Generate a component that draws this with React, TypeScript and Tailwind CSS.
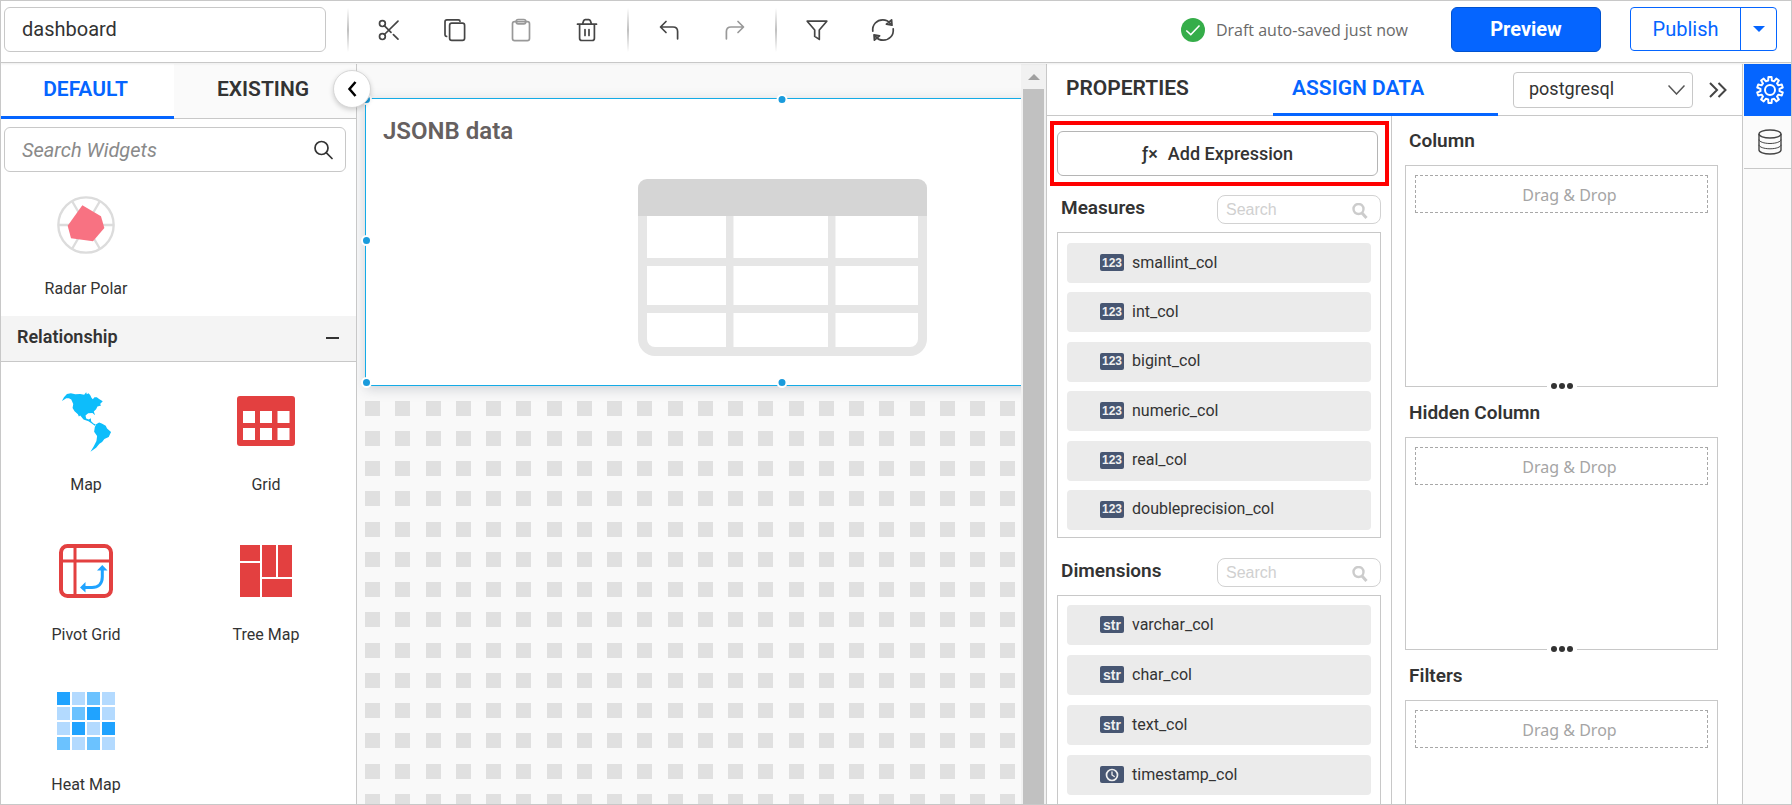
import React from "react";

type IconProps = { children: React.ReactNode; className?: string; box?: string };

function Stroke({ children, className = "size-6", box = "0 0 24 24" }: IconProps) {
  return (
    <svg
      viewBox={box}
      className={className}
      fill="none"
      stroke="currentColor"
      strokeWidth="1.7"
      strokeLinecap="round"
      strokeLinejoin="round"
      aria-hidden="true"
    >
      {children}
    </svg>
  );
}

function ToolButton({ label, muted, children }: { label: string; muted?: boolean; children: React.ReactNode }) {
  return (
    <button
      type="button"
      aria-label={label}
      disabled={muted}
      className={`flex h-[46px] w-[66px] items-center justify-center ${muted ? "text-[#999999]" : "text-[#454545]"}`}
    >
      <Stroke>{children}</Stroke>
    </button>
  );
}

function Divider() {
  return (
    <div className="flex w-4 justify-center">
      <div className="h-11 w-0.5 bg-linear-to-b from-white via-[#c0c0c0] to-white" />
    </div>
  );
}

function Toolbar() {
  return (
    <header className="z-20 flex h-[62px] shrink-0 items-start border-b border-[#c8c8c8] bg-white pt-1.5 shadow-[0_1px_2px_rgba(0,0,0,0.08)]">
      <input
        aria-label="Dashboard name"
        defaultValue="dashboard"
        className="mr-3.5 ml-[3px] h-[45px] w-[322px] shrink-0 rounded-md border border-[#c8c8c8] pr-4 pb-px pl-[17px] text-xl text-[#333333] outline-none"
      />
      <div className="flex items-center">
        <Divider />
        <ToolButton label="Cut">
          <circle cx="5.4" cy="5.6" r="2.9" />
          <circle cx="5.4" cy="18.6" r="2.9" />
          <path d="M7.3 7.7 14 14.3M16.4 16.6 21 21.2M21 3.2 7.4 16.5" />
        </ToolButton>
        <ToolButton label="Copy">
          <rect x="6.6" y="5.2" width="15" height="17.2" rx="2.2" />
          <path d="M3.6 18.4c-1 0-1.6-.8-1.6-1.8V3.8C2 2.6 2.7 1.9 3.9 1.9H15.4c1 0 1.6.5 1.6 1.3" />
        </ToolButton>
        <ToolButton label="Paste" muted>
          <rect x="3.5" y="3.6" width="17" height="19" rx="2.2" />
          <rect x="7.2" y="1.5" width="9.6" height="4.3" rx="2" />
        </ToolButton>
        <ToolButton label="Delete">
          <path d="M2.5 6.2H21.5M4.6 6.2V20.2c0 1.5.8 2.3 2.2 2.3H17.2c1.4 0 2.2-.8 2.2-2.3V6.2M7.5 6 8.7 2.6C9 1.9 9.5 1.6 10.2 1.6H13.8c.7 0 1.2.3 1.5 1L16.5 6M10 11.5V17.5M14 11.5V17.5" />
        </ToolButton>
        <Divider />
        <ToolButton label="Undo">
          <path d="M9 3.5 3.5 9 9 14.5M3.8 9H16c3 0 4.6 1.6 4.6 4.6V20.8" />
        </ToolButton>
        <ToolButton label="Redo" muted>
          <path d="M15 3.5 20.5 9 15 14.5M20.2 9H8c-3 0-4.6 1.6-4.6 4.6V20.8" />
        </ToolButton>
        <Divider />
        <ToolButton label="Filter">
          <path d="M2.2 3.2H21.8L14.3 12V21.4L9.7 18.4V12Z" />
        </ToolButton>
        <ToolButton label="Refresh">
          <path d="M1.8 13.2C1 6.5 6 1.8 11.8 1.8c3.1 0 5.6 1.2 7.6 3.6M20.6 1.8 21 7.2 15.4 6.2ZM22.2 10.8C23 17.5 18 22.2 12.2 22.2c-3.1 0-5.6-1.2-7.6-3.6M3.4 22.2 3 16.8 8.6 17.8Z" />
        </ToolButton>
      </div>
      <div className="ml-auto flex items-start pr-3.5">
        <div className="mr-[43px] flex h-[45px] items-center gap-[11px]">
          <svg viewBox="0 0 24 24" className="size-6" aria-hidden="true">
            <circle cx="12" cy="12" r="12" fill="#35ad49" />
            <path d="M5.3 12.5 9.8 16.6 18.5 7.6" fill="none" stroke="#fff" strokeWidth="1.5" />
          </svg>
          <span className="font-['Open_Sans',sans-serif] text-base whitespace-nowrap text-[#696969]">
            Draft auto-saved just now
          </span>
        </div>
        <button type="button" className="mr-[29px] h-[45px] w-[150px] rounded-md border border-[#0052cf] bg-[#0565ff] pb-0.5 text-xl font-bold text-white">
          Preview
        </button>
        <div className="flex h-11 w-[147px] rounded-[4px] border border-[#0565ff] text-[#0565ff]">
          <button type="button" className="flex-1 text-xl">
            Publish
          </button>
          <button type="button" aria-label="More publish options" className="flex w-9 items-center justify-center border-l border-[#0565ff]">
            <svg viewBox="0 0 12 6" className="h-1.5 w-3" fill="currentColor" aria-hidden="true">
              <path d="M0 0H12L6 6Z" />
            </svg>
          </button>
        </div>
      </div>
    </header>
  );
}

function RadarIcon() {
  return (
    <svg viewBox="0 0 174 174" className="size-[58px]" aria-hidden="true">
      <g fill="none" stroke="#dcdcdc" strokeWidth="7">
        <circle cx="87" cy="87" r="83" />
        <path d="M3 87H171M45 15 129 159M129 15 45 159" />
      </g>
      <path d="M76 28 132 61 142 96 108 136 42 127 32 89Z" fill="#f87282" />
    </svg>
  );
}

function MapIcon() {
  return (
    <svg viewBox="183 633 152 184" className="h-[61px] w-[51px]" fill="#0dbdfb" aria-hidden="true">
      <path d="M185 663 191 652 200 642 212 640 225 643 240 642 252 644 258 637 260 643 265 640 270 645 274 653 278 658 283 652 290 652 297 657 308 664 300 672 303 677 292 680 288 688 281 695 285 706 277 699 264 700 256 707 258 716 266 719 272 715 273 724 280 731 287 734 284 738 275 731 265 724 250 719 240 707 236 710 233 703 223 694 217 684 219 672 213 659 206 655 198 655Z" />
      <path d="M288 733 297 728 305 731 317 738 321 746 333 757 326 772 313 778 306 787 298 792 288 804 271 816 281 800 289 784 291 769 282 756 284 742Z" />
    </svg>
  );
}

function GridIcon() {
  return (
    <svg viewBox="0 0 58 50" className="h-[50px] w-[58px]" aria-hidden="true">
      <rect width="58" height="50" rx="3" fill="#e34040" />
      <path fill="#fff" d="M6 15h12v12H6zM23 15h12v12H23zM40.5 15h12v12h-12zM6 32h12v12H6zM23 32h12v12H23zM40.5 32h12v12h-12z" />
    </svg>
  );
}

function PivotIcon() {
  return (
    <svg viewBox="0 0 54 54" className="size-[54px]" aria-hidden="true">
      <g fill="none" stroke="#e34040">
        <rect x="2" y="2" width="50" height="50" rx="6.5" strokeWidth="4" />
        <path d="M16 2V52M2 17H52" strokeWidth="3" />
      </g>
      <path d="M43.3 26V33C43.3 40 39 43.5 33 43.5H26" fill="none" stroke="#20a3ff" strokeWidth="3" />
      <path d="M38 26.5 43.3 21 48.5 26.5ZM26.5 38 21 43.5 26.5 48.5Z" fill="#20a3ff" />
    </svg>
  );
}

function TreeIcon() {
  return (
    <svg viewBox="0 0 52 52" className="size-[52px]" fill="#e34040" aria-hidden="true">
      <path d="M0 0H20V16H0zM0 18H20V52H0zM22 0H36V32H22zM38 0H52V32H38zM22 34H52V52H22z" />
    </svg>
  );
}

const heat = [
  ["#20a3ff", "#b3daff", "#6bc2ff", "#b3daff"],
  ["#b3daff", "#6bc2ff", "#20a3ff", "#b3daff"],
  ["#b3daff", "#20a3ff", "#b3daff", "#20a3ff"],
  ["#6bc2ff", "#b3daff", "#6bc2ff", "#b3daff"],
];

function HeatIcon() {
  return (
    <svg viewBox="0 0 58 58" className="size-[58px]" aria-hidden="true">
      {heat.map((row, y) =>
        row.map((fill, x) => <rect key={`${x}-${y}`} x={x * 15} y={y * 15} width="13" height="13" fill={fill} />),
      )}
    </svg>
  );
}

function Widget({ label, children }: { label: string; children: React.ReactNode }) {
  return (
    <button type="button" className="flex h-[150px] w-full shrink-0 flex-col items-center text-[#333333]">
      <span className="flex h-[88px] items-end justify-center">
        <span className="flex h-16 items-center">{children}</span>
      </span>
      <span className="mt-5 text-base">{label}</span>
    </button>
  );
}

function Sidebar() {
  return (
    <aside className="relative z-10 w-[356px] shrink-0 border-r border-[#c8c8c8] bg-white">
      <div className="flex h-[55px] text-[21px] font-semibold">
        <button type="button" className="w-[173px] border-b-3 border-[#0565ff] pr-1 text-[#0565ff]">
          DEFAULT
        </button>
        <button type="button" className="flex-1 border-b border-[#c8c8c8] bg-[#fafafa] pr-1 pb-0.5 text-[#333333]">
          EXISTING
        </button>
      </div>
      <button
        type="button"
        aria-label="Collapse widget panel"
        className="absolute top-1.5 -right-[15px] flex size-[38px] items-center justify-center rounded-full border border-[#d8d8d8] bg-white text-black shadow-[0_2px_5px_rgba(0,0,0,0.18)]"
      >
        <svg viewBox="0 0 10 16" className="h-4 w-2.5" fill="none" stroke="currentColor" strokeWidth="2.5" aria-hidden="true">
          <path d="M8.5 1 2.5 8 8.5 15" />
        </svg>
      </button>
      <div className="mt-2 mr-2.5 ml-[3px] flex h-[45px] items-center rounded-md border border-[#c8c8c8] pr-3 pl-[17px]">
        <input
          aria-label="Search Widgets"
          placeholder="Search Widgets"
          className="min-w-0 flex-1 text-xl text-[#333333] italic outline-none placeholder:text-[#8a8a8a]"
        />
        <Stroke className="size-5 text-[#333333]" box="0 0 20 20">
          <circle cx="8.5" cy="8" r="6.5" />
          <path d="M13.2 12.7 19 18.5" />
        </Stroke>
      </div>
      <div className="-mt-[3px] h-[147px] w-[170px] overflow-hidden">
        <Widget label="Radar Polar">
          <RadarIcon />
        </Widget>
      </div>
      <button
        type="button"
        className="flex h-[46px] w-full items-center justify-between border-b border-[#c8c8c8] bg-[#f4f4f4] pr-[17px] pb-1 pl-4 text-lg font-semibold text-[#333333]"
      >
        Relationship
        <span className="mt-0.5 h-0.5 w-[13px] bg-[#333333]" />
      </button>
      <div className="grid grid-cols-[170px_190px] pt-[3px]">
        <Widget label="Map">
          <MapIcon />
        </Widget>
        <Widget label="Grid">
          <GridIcon />
        </Widget>
        <Widget label="Pivot Grid">
          <PivotIcon />
        </Widget>
        <Widget label="Tree Map">
          <TreeIcon />
        </Widget>
        <Widget label="Heat Map">
          <HeatIcon />
        </Widget>
      </div>
    </aside>
  );
}

const DOT_PITCH = 30.25;
const dotPath = Array.from({ length: 30 }, (_, r) =>
  Array.from({ length: 60 }, (_, c) => `M${Math.round(c * DOT_PITCH)} ${Math.floor(r * DOT_PITCH)}h15v15h-15z`).join(""),
).join("");

function Handle({ className }: { className: string }) {
  return <span className={`absolute size-[11px] rounded-full border-2 border-white bg-[#1a9bdc] ${className}`} />;
}

function Canvas() {
  return (
    <main className="flex min-w-0 flex-1 bg-[#f9f9f9]">
      <div className="flex min-w-0 flex-1 flex-col overflow-hidden pt-[34px] pl-2">
        <section className="relative h-72 w-[834px] shrink-0 border border-[#14abe6] bg-white pt-4 pl-[17px] shadow-[0_3px_12px_rgba(60,70,90,0.22)]">
          <h2 className="text-2xl font-semibold text-[#666060]">JSONB data</h2>
          <svg viewBox="0 0 289 177" className="mt-8 ml-[255px] h-[177px] w-[289px]" aria-hidden="true">
            <rect width="289" height="177" rx="17" fill="#e6e6e6" />
            <path d="M0 37V9A9 9 0 0 1 9 0H280A9 9 0 0 1 289 9V37Z" fill="#d5d5d5" />
            <path
              fill="#fff"
              d="M9 37H88V79H9zM95.5 37H190V79H95.5zM197.5 37H280V79H197.5zM9 87H88V126H9zM95.5 87H190V126H95.5zM197.5 87H280V126H197.5zM9 134H88V168H17a8 8 0 0 1-8-8zM95.5 134H190V168H95.5zM197.5 134H280V160a8 8 0 0 1-8 8H197.5z"
            />
          </svg>
          <Handle className="-top-[5px] -left-[5px]" />
          <Handle className="-top-[5px] left-1/2 -translate-x-1/2" />
          <Handle className="top-[136px] -left-[5px]" />
          <Handle className="-bottom-[3px] -left-[5px]" />
          <Handle className="-bottom-[3px] left-1/2 -translate-x-1/2" />
        </section>
        <svg className="mt-[15px] min-h-0 w-full flex-1" shapeRendering="crispEdges" aria-hidden="true">
          <path d={dotPath} fill="#e0e0e0" />
        </svg>
      </div>
      <div className="flex w-[25px] shrink-0 flex-col items-center bg-[#f1f1f1]">
        <svg viewBox="0 0 12 6" className="mt-2.5 mb-[9px] h-1.5 w-3 shrink-0" fill="#a0a0a0" aria-hidden="true">
          <path d="M6 0 12 6H0Z" />
        </svg>
        <div className="w-[21px] flex-1 bg-[#c1c1c1]" />
      </div>
    </main>
  );
}

function TypeBadge({ kind }: { kind: string }) {
  return (
    <span className="flex h-[17px] w-6 items-center justify-center rounded-xs bg-[#475672] font-['Liberation_Sans',sans-serif] text-xs font-bold text-[#f0f0f0]">
      {kind === "time" ? (
        <Stroke className="size-3.5" box="0 0 14 14">
          <circle cx="7" cy="7" r="5.5" />
          <path d="M7 4V7L9.3 8.5" strokeWidth="1.3" />
        </Stroke>
      ) : (
        <span className={kind === "str" ? "text-sm leading-4" : ""}>{kind}</span>
      )}
    </span>
  );
}

function Field({ kind, name }: { kind: string; name: string }) {
  return (
    <li className="flex h-10 shrink-0 items-center gap-2 rounded-[4px] bg-[#ebebeb] pb-px pl-[33px] text-base text-[#333333]">
      <TypeBadge kind={kind} />
      {name}
    </li>
  );
}

function FieldHeader({ title }: { title: string }) {
  return (
    <div className="flex items-start justify-between pl-1">
      <h3 className="pt-px text-[19px] leading-6 font-semibold text-[#333333]">{title}</h3>
      <div className="flex h-[29px] w-[164px] items-center rounded-lg border border-[#d2d2d2] pr-3 pl-2">
        <input
          aria-label={`Search ${title}`}
          placeholder="Search"
          className="min-w-0 flex-1 font-['Liberation_Sans',sans-serif] text-base outline-none placeholder:text-[#d0d0d0]"
        />
        <svg viewBox="0 0 16 16" className="mt-0.5 size-4" fill="none" stroke="#cccccc" aria-hidden="true">
          <circle cx="6.5" cy="6" r="5" strokeWidth="2.4" />
          <path d="M10 10 14.5 15" strokeWidth="3" />
        </svg>
      </div>
    </div>
  );
}

const measures = ["smallint_col", "int_col", "bigint_col", "numeric_col", "real_col", "doubleprecision_col"];
const dimensions = [
  ["str", "varchar_col"],
  ["str", "char_col"],
  ["str", "text_col"],
  ["time", "timestamp_col"],
];

function Fields() {
  return (
    <div className="flex w-[345px] shrink-0 flex-col border-r border-[#c8c8c8]">
      <div className="mt-[5px] ml-[3px] h-[65px] w-[339px] shrink-0 border-4 border-[#ff0000] px-[3px] pt-1.5">
        <button type="button" className="flex h-[45px] w-[321px] items-center justify-center gap-2.5 rounded-md border border-[#b5b5b5] text-lg font-medium text-[#333333]">
          <span>ƒ×</span>
          <span>Add Expression</span>
        </button>
      </div>
      <div className="flex min-h-0 flex-1 flex-col px-2.5">
        <div className="mt-[9px]">
          <FieldHeader title="Measures" />
        </div>
        <ul className="mt-2 flex h-[306px] shrink-0 flex-col justify-between border border-[#c8c8c8] px-[9px] pt-2.5 pb-[7px]">
          {measures.map((name) => (
            <Field key={name} kind="123" name={name} />
          ))}
        </ul>
        <div className="mt-5">
          <FieldHeader title="Dimensions" />
        </div>
        <ul className="mt-2 flex min-h-0 flex-1 flex-col gap-2.5 border border-b-0 border-[#c8c8c8] px-[9px] pt-[9px]">
          {dimensions.map(([kind, name]) => (
            <Field key={name} kind={kind} name={name} />
          ))}
        </ul>
      </div>
    </div>
  );
}

function DropZone({ title, className, last }: { title: string; className: string; last?: boolean }) {
  return (
    <section className={`flex flex-col ${className}`}>
      <h3 className="pl-1 text-[19px] leading-6 font-semibold text-[#333333]">{title}</h3>
      <div className={`relative mt-3 flex-1 border border-[#c8c8c8] p-[9px] ${last ? "border-b-0" : ""}`}>
        <div className="flex h-[38px] items-center justify-center border border-dashed border-[#a8a8a8] pt-0.5 pl-4 font-['Noto_Sans',sans-serif] text-base text-[#a5a5a5]">
          Drag &amp; Drop
        </div>
        {!last && (
          <span className="absolute -bottom-[3px] left-1/2 flex -translate-x-1/2 gap-0.5 bg-white px-1">
            <i className="size-1.5 rounded-full bg-[#333333]" />
            <i className="size-1.5 rounded-full bg-[#333333]" />
            <i className="size-1.5 rounded-full bg-[#333333]" />
          </span>
        )}
      </div>
    </section>
  );
}

function DataPanel() {
  return (
    <div className="flex w-[697px] shrink-0 flex-col border-x border-[#c8c8c8] bg-white">
      <div className="flex h-[52px] shrink-0 text-[21px] font-semibold">
        <button type="button" className="w-[226px] border-b border-[#c8c8c8] pb-0.5 pl-[19px] text-left text-[#333333]">
          PROPERTIES
        </button>
        <button type="button" className="w-[225px] border-b-3 border-[#0565ff] pl-[19px] text-left text-[#0565ff]">
          ASSIGN DATA
        </button>
        <div className="flex flex-1 items-center justify-between border-b border-[#c8c8c8] px-[15px]">
          <div className="relative flex">
            <select
              aria-label="Data source"
              className="h-9 w-[180px] appearance-none rounded-[4px] border border-[#c8c8c8] bg-white pb-0.5 pl-[15px] text-lg font-normal text-[#333333] outline-none"
            >
              <option>postgresql</option>
            </select>
            <svg viewBox="0 0 17 10" className="pointer-events-none absolute top-[13px] right-2 h-2.5 w-[17px]" fill="none" stroke="#555555" strokeWidth="1.5" aria-hidden="true">
              <path d="M.5.5 8.5 9 16.5.5" />
            </svg>
          </div>
          <button type="button" aria-label="Collapse panel" className="text-[#454545]">
            <svg viewBox="0 0 18 16" className="h-4 w-[18px]" fill="none" stroke="currentColor" strokeWidth="2" aria-hidden="true">
              <path d="M1 1 8 8 1 15M9.5 1 16.5 8 9.5 15" />
            </svg>
          </button>
        </div>
      </div>
      <div className="flex min-h-0 flex-1">
        <Fields />
        <div className="flex min-w-0 flex-1 flex-col pr-6 pl-[13px]">
          <DropZone title="Column" className="mt-[13px] h-[258px] shrink-0" />
          <DropZone title="Hidden Column" className="mt-3.5 h-[249px] shrink-0" />
          <DropZone title="Filters" className="mt-3.5 min-h-0 flex-1" last />
        </div>
      </div>
    </div>
  );
}

const gearTeeth = Array.from({ length: 10 }, (_, i) => {
  const at = (deg: number, r: number) => {
    const a = ((i * 36 + deg) * Math.PI) / 180;
    return `${(14 + r * Math.sin(a)).toFixed(2)} ${(14 - r * Math.cos(a)).toFixed(2)}`;
  };
  return `${i ? "L" : "M"}${at(-11, 9.6)}L${at(-7, 13)}L${at(7, 13)}L${at(11, 9.6)}`;
}).join("");

function Rail() {
  return (
    <nav className="flex w-12 shrink-0 flex-col bg-[#fbfbfb] pl-px">
      <button type="button" aria-label="Settings" className="flex h-[52px] items-center justify-center bg-[#0565ff] pl-1 text-white">
        <svg viewBox="0 0 28 28" className="size-7" fill="none" stroke="currentColor" strokeWidth="2" strokeLinejoin="round" aria-hidden="true">
          <path d={`${gearTeeth}Z`} />
          <circle cx="14" cy="14" r="5" />
        </svg>
      </button>
      <button type="button" aria-label="Data sources" className="flex h-[53px] items-center justify-center border-b border-[#c8c8c8] pl-1 text-[#454545]">
        <svg viewBox="0 0 24 26" className="h-[26px] w-6" fill="none" stroke="currentColor" strokeWidth="1.4" aria-hidden="true">
          <ellipse cx="12" cy="5" rx="11" ry="4" />
          <path d="M1 5V21C1 23.2 6 25 12 25S23 23.2 23 21V5" />
          <path d="M1 10.5C1 12.7 6 14.5 12 14.5S23 12.7 23 10.5M1 15.8C1 18 6 19.8 12 19.8S23 18 23 15.8" strokeWidth="1" />
        </svg>
      </button>
    </nav>
  );
}

export default function App() {
  return (
    <div className="flex h-screen flex-col overflow-hidden border border-[#c8c8c8] bg-white font-[Roboto,sans-serif]">
      <Toolbar />
      <div className="flex min-h-0 flex-1 pt-px">
        <Sidebar />
        <Canvas />
        <DataPanel />
        <Rail />
      </div>
    </div>
  );
}
